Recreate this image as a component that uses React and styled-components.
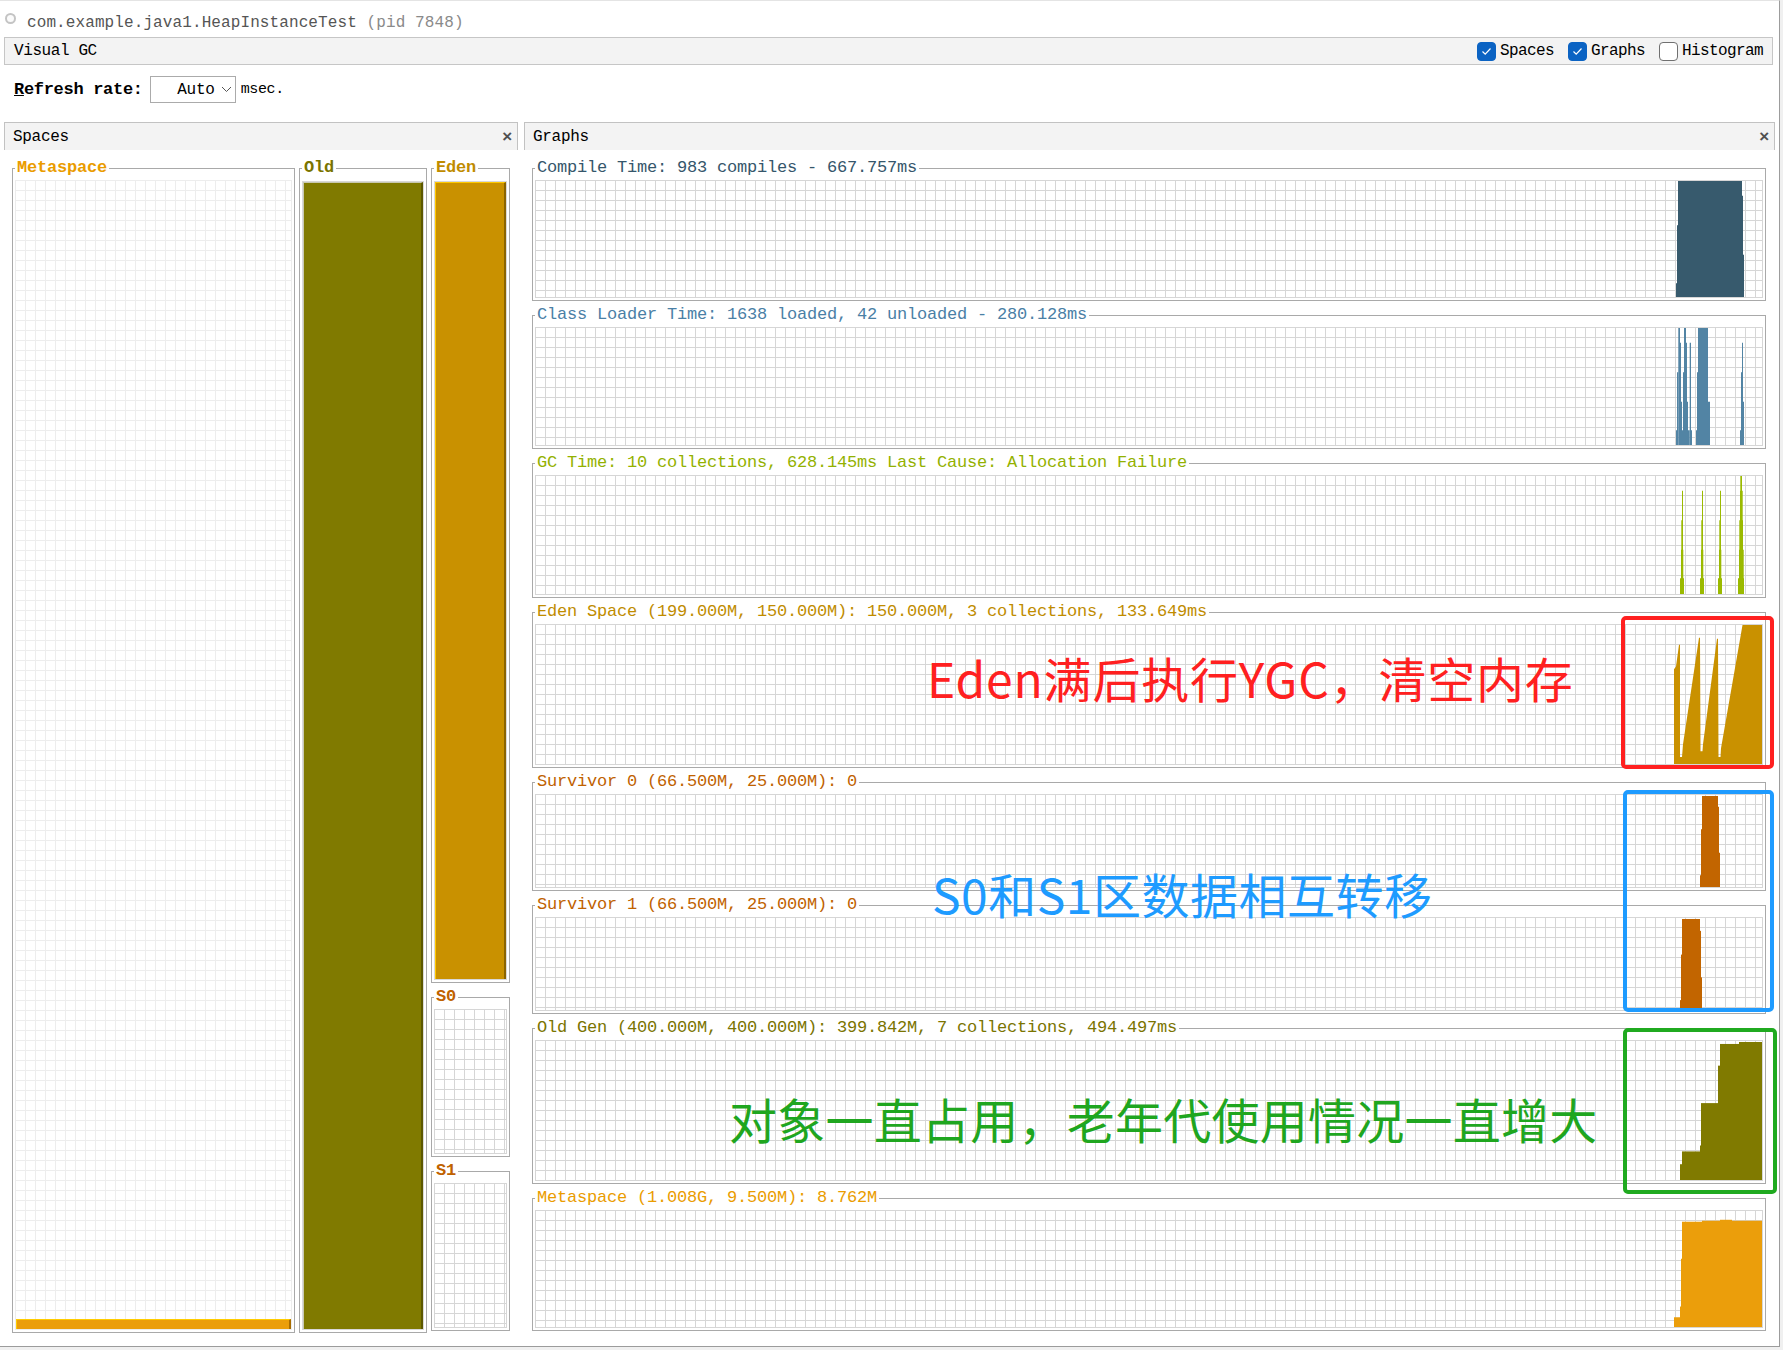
import React from "react";
import styled, { createGlobalStyle } from "styled-components";

const GlobalStyle = createGlobalStyle`
  html, body {
    margin: 0;
    padding: 0;
    background: #f0f0f0;
  }
  body {
    font-family: "Liberation Mono", "DejaVu Sans Mono", monospace;
    color: #000;
  }
`;

const C = {
  compile: "#375a6d",
  compileText: "#35566b",
  loader: "#5284a4",
  loaderText: "#4a80a6",
  gc: "#9bba00",
  gcText: "#93b100",
  eden: "#c99100",
  edenText: "#c08c00",
  surv: "#c26500",
  survText: "#c06200",
  old: "#807a00",
  oldText: "#7a7400",
  meta: "#eb9e0b",
  metaText: "#ea9c00",
};

const spaces = { meta: 8.762 / 1008, old: 399.842 / 400, eden: 150 / 150 };

// chart shapes, in page pixels: [x1, x2, top] columns, or a path
const graphs = [
  {
    title: "Compile Time: 983 compiles - 667.757ms",
    color: C.compileText,
    fill: C.compile,
    h: 118,
    box: [536, 179, 1226, 118],
    cols: [
      [1676, 1677, 283],
      [1677, 1678, 224],
      [1678, 1742, 179],
      [1742, 1743, 194],
      [1743, 1744, 254],
    ],
  },
  {
    title: "Class Loader Time: 1638 loaded, 42 unloaded - 280.128ms",
    color: C.loaderText,
    fill: C.loader,
    h: 119,
    box: [536, 326, 1226, 119],
    cols: [
      [1676, 1677, 430],
      [1677, 1678.3, 371],
      [1678.3, 1680, 326],
      [1680, 1681, 341],
      [1681, 1682, 401],
      [1682, 1683, 430],
      [1683, 1684, 371],
      [1684, 1686, 326],
      [1686, 1687, 341],
      [1687, 1688, 401],
      [1688, 1689.7, 430],
      [1689.7, 1691, 341],
      [1691, 1692, 430],
      [1696, 1697, 430],
      [1697, 1698, 371],
      [1698, 1708, 326],
      [1708, 1710, 401],
      [1740, 1741, 430],
      [1741, 1742, 371],
      [1742, 1743, 341],
      [1743, 1744, 401],
    ],
  },
  {
    title: "GC Time: 10 collections, 628.145ms Last Cause: Allocation Failure",
    color: C.gcText,
    fill: C.gc,
    h: 120,
    box: [536, 473, 1226, 120],
    cols: [0, 20, 38]
      .flatMap((d) => [
        [1680 + d, 1684 + d, 577],
        [1681 + d, 1683.3 + d, 548],
        [1681.3 + d, 1682.7 + d, 518],
        [1682 + d, 1683 + d, 488],
      ])
      .concat([
        [1738, 1744, 577],
        [1739, 1743.7, 548],
        [1739.3, 1743, 518],
        [1740, 1742.7, 488],
        [1740.3, 1742, 473],
      ]),
  },
  {
    title: "Eden Space (199.000M, 150.000M): 150.000M, 3 collections, 133.649ms",
    color: C.edenText,
    fill: C.eden,
    h: 141,
    box: [536, 622, 1226, 141],
    path:
      "M1674,763 L1674,667 L1676,664 L1679,642 L1680,642 L1680,756 L1682,756 L1683,743 L1699,635 L1700,635 L1700.5,750 L1702.5,750 L1703,743 L1717,636 L1718,636 L1718.5,756 L1720.5,756 L1721,747 L1742.5,622 L1762,622 L1762,640 L1763.7,640 L1763.7,763 Z",
  },
  {
    title: "Survivor 0 (66.500M, 25.000M): 0",
    color: C.survText,
    fill: C.surv,
    h: 94,
    box: [536, 793, 1226, 94],
    cols: [
      [1700, 1701, 875],
      [1701, 1702, 828],
      [1702, 1718, 794],
      [1718, 1719, 805],
      [1719, 1720, 852],
    ],
  },
  {
    title: "Survivor 1 (66.500M, 25.000M): 0",
    color: C.survText,
    fill: C.surv,
    h: 94,
    box: [536, 915, 1226, 93],
    cols: [
      [1680, 1681, 998],
      [1681, 1682, 952],
      [1682, 1700, 916],
      [1700, 1701, 928],
      [1701, 1702, 975],
    ],
  },
  {
    title: "Old Gen (400.000M, 400.000M): 399.842M, 7 collections, 494.497ms",
    color: C.oldText,
    fill: C.old,
    h: 141,
    box: [536, 1038, 1226, 141],
    cols: [
      [1680, 1682, 1163],
      [1682, 1700, 1150],
      [1700, 1701, 1144],
      [1701, 1718, 1101],
      [1718, 1720, 1063],
      [1720, 1739, 1041],
      [1739, 1762, 1039],
      [1762, 1763, 1057],
      [1763, 1764, 1127],
    ],
  },
  {
    title: "Metaspace (1.008G, 9.500M): 8.762M",
    color: C.metaText,
    fill: C.meta,
    h: 118,
    box: [536, 1208, 1226, 119],
    cols: [
      [1674, 1680, 1317],
      [1680, 1681, 1306],
      [1681, 1682, 1257],
      [1682, 1702, 1219],
      [1702, 1720, 1218],
      [1720, 1732, 1217],
      [1732, 1762, 1218],
      [1762, 1763, 1232],
      [1763, 1764, 1286],
    ],
  },
];

const Window = styled.div`
  position: relative;
  box-sizing: border-box;
  width: 1780px;
  height: 1347px;
  background: #fff;
  border-top: 1px solid #e4e4e4;
  border-right: 1px solid #9c9c9c;
  border-bottom: 1px solid #9c9c9c;
  overflow: hidden;
`;

const TitleRow = styled.div`
  display: flex;
  align-items: center;
  gap: 11px;
  height: 20px;
  margin-top: 12px;
  padding-left: 5px;
  font-size: 16px;
  letter-spacing: 0.1px;
  color: #555;
`;

const Dot = styled.span`
  align-self: flex-start;
  margin-top: 0;
  width: 11px;
  height: 11px;
  box-sizing: border-box;
  border-radius: 50%;
  border: 2px solid #c4c4c4;
  background: #fbfbfb;
`;

const Pid = styled.span`
  color: #8a8a8a;
`;

const Toolbar = styled.div`
  display: flex;
  align-items: center;
  justify-content: space-between;
  box-sizing: border-box;
  height: 28px;
  margin: 4px 6px 0 4px;
  padding: 0 9px;
  border: 1px solid #c6c6c6;
  background: #f3f3f3;
  font-size: 16px;
  letter-spacing: -0.4px;
`;

const Checks = styled.div`
  display: flex;
  align-items: center;
  gap: 14px;
  letter-spacing: -0.6px;
`;

const CheckItem = styled.label`
  display: flex;
  align-items: center;
  gap: 4px;
`;

const CheckBox = styled.span`
  display: inline-flex;
  align-items: center;
  justify-content: center;
  box-sizing: border-box;
  width: 19px;
  height: 19px;
  border-radius: 4px;
  background: ${(p) => (p.$on ? "#0b63c3" : "#fff")};
  border: 1px solid ${(p) => (p.$on ? "#0b63c3" : "#707070")};
`;

const RefreshRow = styled.div`
  display: flex;
  align-items: center;
  height: 27px;
  margin-top: 11px;
  padding-left: 14px;
  font-size: 16px;
`;

const RefreshLabel = styled.span`
  font-size: 17px;
  font-weight: bold;
  letter-spacing: -0.3px;
  margin-right: 7px;
`;

const Select = styled.span`
  display: flex;
  align-items: center;
  justify-content: flex-end;
  gap: 6px;
  box-sizing: border-box;
  width: 86px;
  height: 27px;
  padding-right: 3px;
  border: 1px solid #ababab;
  background: #fff;
  font-size: 16px;
  letter-spacing: -0.2px;
`;

const Unit = styled.span`
  margin-left: 5px;
  font-size: 15px;
  letter-spacing: -0.4px;
`;

const Panels = styled.div`
  display: flex;
  gap: 6px;
  margin: 19px 0 0 4px;
`;

const Panel = styled.section`
  width: ${(p) => p.$w}px;
`;

const PanelHead = styled.div`
  display: flex;
  align-items: center;
  justify-content: space-between;
  box-sizing: border-box;
  height: 28px;
  padding: 0 5px 0 8px;
  border: 1px solid #c2c2c2;
  border-bottom: none;
  background: #f3f3f3;
  font-size: 16px;
  letter-spacing: -0.3px;
`;

const Close = styled.span`
  font-family: "Liberation Sans", Arial, sans-serif;
  font-size: 17px;
  font-weight: bold;
  color: #505050;
`;

const SpacesBody = styled.div`
  display: flex;
  gap: 4px;
  padding: 9px 8px 0 8px;
`;

const Column = styled.div`
  display: flex;
  flex-direction: column;
  gap: 5px;
  width: ${(p) => p.$w}px;
`;

const GraphsBody = styled.div`
  display: flex;
  flex-direction: column;
  gap: 5px;
  padding: 9px 9px 0 8px;
`;

const Group = styled.fieldset`
  box-sizing: border-box;
  width: ${(p) => (p.$w ? `${p.$w}px` : "auto")};
  min-width: 0;
  margin: 0;
  padding: ${(p) => p.$pt}px 2px 2px;
  border: 1px solid #a9a9a9;
`;

const Legend = styled.legend`
  padding: 0 2px;
  font-size: 17px;
  line-height: 18px;
  letter-spacing: -0.2px;
  font-weight: ${(p) => (p.$bold ? "bold" : "normal")};
  color: ${(p) => p.$color};
  white-space: nowrap;
`;

const Grid = styled.div`
  position: relative;
  box-sizing: border-box;
  height: ${(p) => p.$h}px;
  border: 1px solid ${(p) => p.$line};
  background-color: #fff;
  background-image: linear-gradient(to right, ${(p) => p.$line} 1px, transparent 1px),
    linear-gradient(to bottom, ${(p) => p.$line} 1px, transparent 1px);
  background-size: 10px 10px;
  background-position: 9px 9px;
  overflow: hidden;
`;

const Fill = styled.div`
  position: absolute;
  left: 0;
  right: 0;
  bottom: 0;
  box-sizing: border-box;
  background: ${(p) => p.$color};
  border-top: 1px solid ${(p) => p.$light};
  border-left: 1px solid ${(p) => p.$light};
  border-right: 2px solid ${(p) => p.$dark};
`;

const ChartSvg = styled.svg`
  position: absolute;
  inset: 0;
  width: 100%;
  height: 100%;
`;

const Mark = styled.div`
  position: absolute;
  left: ${(p) => p.$x}px;
  top: ${(p) => p.$y}px;
  width: ${(p) => p.$w}px;
  height: ${(p) => p.$h}px;
  box-sizing: border-box;
  border: 4px solid ${(p) => p.$color};
  border-radius: 5px;
`;

const Note = styled.div`
  position: absolute;
  left: ${(p) => p.$x}px;
  top: ${(p) => p.$y}px;
  font-family: "Noto Sans CJK SC", "Noto Sans", sans-serif;
  font-size: 48px;
  line-height: 48px;
  letter-spacing: ${(p) => p.$ls}px;
  color: ${(p) => p.$color};
  white-space: nowrap;
`;

const Check = () => (
  <svg width="11" height="9" viewBox="0 0 11 9">
    <polyline points="1.5,4.5 4.2,7.2 9.5,1.5" fill="none" stroke="#fff" strokeWidth="1.2" />
  </svg>
);

const Chevron = () => (
  <svg width="11" height="7" viewBox="0 0 11 7">
    <polyline points="1,1 5.5,5.5 10,1" fill="none" stroke="#555" strokeWidth="1" />
  </svg>
);

const Chart = ({ g }) => {
  const [x0, y0, w, h] = g.box;
  const bottom = y0 + h;
  return (
    <ChartSvg viewBox={`${x0} ${y0} ${w} ${h}`} preserveAspectRatio="none">
      {g.cols &&
        g.cols.map(([a, b, top], i) => (
          <rect key={i} x={a} y={top} width={b - a} height={bottom - top} fill={g.fill} />
        ))}
      {g.path && <path d={g.path} fill={g.fill} />}
    </ChartSvg>
  );
};

const SpaceBox = ({ title, color, w, h, pt, line, children }) => (
  <Group $w={w} $pt={pt}>
    <Legend $color={color} $bold>
      {title}
    </Legend>
    <Grid $h={h} $line={line}>
      {children}
    </Grid>
  </Group>
);

export default function App() {
  return (
    <>
      <GlobalStyle />
      <Window>
        <TitleRow>
          <Dot />
          <span>
            com.example.java1.HeapInstanceTest <Pid>(pid 7848)</Pid>
          </span>
        </TitleRow>

        <Toolbar>
          <span>Visual GC</span>
          <Checks>
            <CheckItem>
              <CheckBox $on>
                <Check />
              </CheckBox>
              Spaces
            </CheckItem>
            <CheckItem>
              <CheckBox $on>
                <Check />
              </CheckBox>
              Graphs
            </CheckItem>
            <CheckItem>
              <CheckBox />
              Histogram
            </CheckItem>
          </Checks>
        </Toolbar>

        <RefreshRow>
          <RefreshLabel>
            <u>R</u>efresh rate:
          </RefreshLabel>
          <Select>
            Auto
            <Chevron />
          </Select>
          <Unit>msec.</Unit>
        </RefreshRow>

        <Panels>
          <Panel $w={514}>
            <PanelHead>
              Spaces
              <Close>×</Close>
            </PanelHead>
            <SpacesBody>
              <SpaceBox title="Metaspace" color={C.metaText} w={283} h={1150} pt={3} line="#ededed">
                <Fill
                  $color={C.meta}
                  $light="#ffcc00"
                  $dark="#a86c00"
                  style={{ height: `${Math.max(spaces.meta * 1150, 9).toFixed(0)}px` }}
                />
              </SpaceBox>
              <SpaceBox title="Old" color={C.oldText} w={128} h={1149} pt={4} line="#d8d8d8">
                <Fill
                  $color={C.old}
                  $light="#c8c8b0"
                  $dark="#5c5800"
                  style={{ height: `${(spaces.old * 100).toFixed(2)}%` }}
                />
              </SpaceBox>
              <Column $w={79}>
                <SpaceBox title="Eden" color={C.edenText} w={79} h={799} pt={4} line="#d8d8d8">
                  <Fill
                    $color={C.eden}
                    $light="#ffc800"
                    $dark="#8a6300"
                    style={{ height: `${spaces.eden * 100}%` }}
                  />
                </SpaceBox>
                <SpaceBox title="S0" color={C.survText} w={79} h={145} pt={3} line="#d6d6d6" />
                <SpaceBox title="S1" color={C.survText} w={79} h={145} pt={3} line="#d6d6d6" />
              </Column>
            </SpacesBody>
          </Panel>

          <Panel $w={1251}>
            <PanelHead>
              Graphs
              <Close>×</Close>
            </PanelHead>
            <GraphsBody>
              {graphs.map((g) => (
                <Group key={g.title} $pt={3}>
                  <Legend $color={g.color}>{g.title}</Legend>
                  <Grid $h={g.h} $line="#d6d6d6">
                    <Chart g={g} />
                  </Grid>
                </Group>
              ))}
            </GraphsBody>
          </Panel>
        </Panels>

        <Mark $x={1621} $y={615} $w={153} $h={153} $color="#ff2020" />
        <Mark $x={1623} $y={789} $w={151} $h={222} $color="#1e9bff" />
        <Mark $x={1623} $y={1027} $w={154} $h={166} $color="#20aa20" />

        <Note $x={927} $y={652} $ls={0.8} $color="#ff2020">
          Eden满后执行YGC，清空内存
        </Note>
        <Note $x={932} $y={868} $ls={0.5} $color="#1e9bff">
          S0和S1区数据相互转移
        </Note>
        <Note $x={729} $y={1093} $ls={0.25} $color="#1fa61f">
          对象一直占用，老年代使用情况一直增大
        </Note>
      </Window>
    </>
  );
}
